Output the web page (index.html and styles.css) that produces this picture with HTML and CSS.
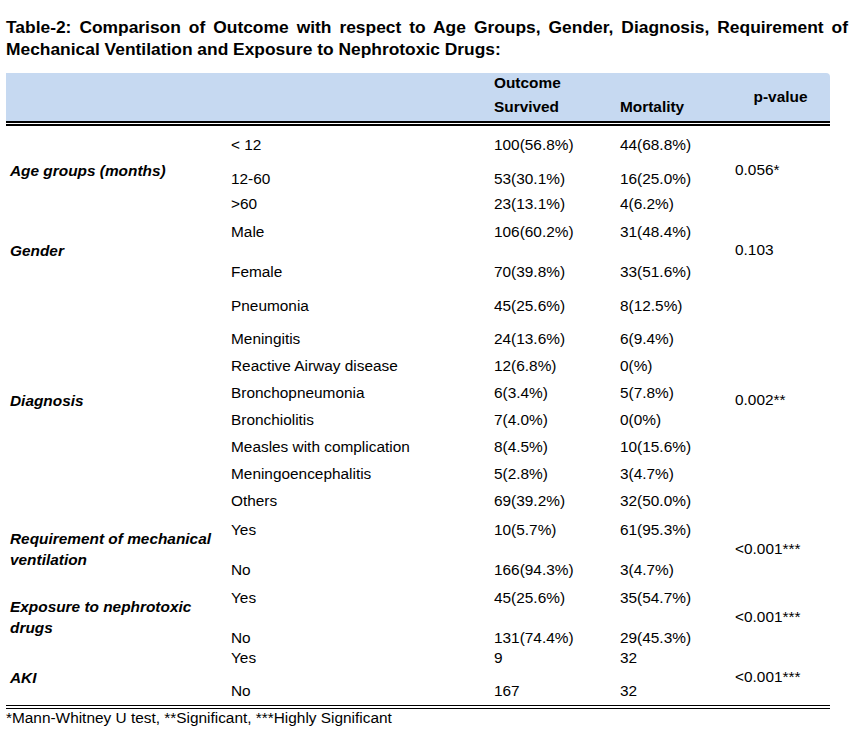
FILE: index.html
```html
<!DOCTYPE html>
<html lang="en">
<head>
  <meta charset="UTF-8" />
  <meta name="viewport" content="width=device-width, initial-scale=1.0"/>
  <title>Table-2: Comparison of Outcome</title>
  <link rel="stylesheet" href="styles.css">
</head>
<body>
<div class="page">
  <p class="caption">Table-2: Comparison of Outcome with respect to Age Groups, Gender, Diagnosis, Requirement of Mechanical Ventilation and Exposure to Nephrotoxic Drugs:</p>

  <table class="outcome">
    <colgroup>
      <col class="c-group">
      <col class="c-sub">
      <col class="c-surv">
      <col class="c-mort">
      <col class="c-p">
    </colgroup>
    <thead>
      <tr class="h-top">
        <th rowspan="2" class="line"></th>
        <th rowspan="2" class="line"></th>
        <th colspan="2">Outcome</th>
        <th rowspan="2" class="line pval">p-value</th>
      </tr>
      <tr class="h-bottom">
        <th class="line">Survived</th>
        <th class="line">Mortality</th>
      </tr>
    </thead>
    <tbody>
      <tr class="h38">
        <td rowspan="3" class="group">Age groups (months)</td>
        <td>&lt; 12</td><td>100(56.8%)</td><td>44(68.8%)</td>
        <td rowspan="3">0.056*</td>
      </tr>
      <tr class="h30"><td>12-60</td><td>53(30.1%)</td><td>16(25.0%)</td></tr>
      <tr class="h20"><td>&gt;60</td><td>23(13.1%)</td><td>4(6.2%)</td></tr>

      <tr class="h36">
        <td rowspan="2" class="group">Gender</td>
        <td>Male</td><td>106(60.2%)</td><td>31(48.4%)</td>
        <td rowspan="2">0.103</td>
      </tr>
      <tr class="h36 low"><td>Female</td><td>70(39.8%)</td><td>33(51.6%)</td></tr>

      <tr class="h39">
        <td rowspan="8" class="group">Diagnosis</td>
        <td>Pneumonia</td><td>45(25.6%)</td><td>8(12.5%)</td>
        <td rowspan="8">0.002**</td>
      </tr>
      <tr><td>Meningitis</td><td>24(13.6%)</td><td>6(9.4%)</td></tr>
      <tr><td>Reactive Airway disease</td><td>12(6.8%)</td><td>0(%)</td></tr>
      <tr><td>Bronchopneumonia</td><td>6(3.4%)</td><td>5(7.8%)</td></tr>
      <tr><td>Bronchiolitis</td><td>7(4.0%)</td><td>0(0%)</td></tr>
      <tr><td>Measles with complication</td><td>8(4.5%)</td><td>10(15.6%)</td></tr>
      <tr><td>Meningoencephalitis</td><td>5(2.8%)</td><td>3(4.7%)</td></tr>
      <tr><td>Others</td><td>69(39.2%)</td><td>32(50.0%)</td></tr>

      <tr class="h32">
        <td rowspan="2" class="group">Requirement of mechanical ventilation</td>
        <td>Yes</td><td>10(5.7%)</td><td>61(95.3%)</td>
        <td rowspan="2">&lt;0.001***</td>
      </tr>
      <tr class="h38 low"><td>No</td><td>166(94.3%)</td><td>3(4.7%)</td></tr>

      <tr class="h28">
        <td rowspan="2" class="group">Exposure to nephrotoxic drugs</td>
        <td>Yes</td><td>45(25.6%)</td><td>35(54.7%)</td>
        <td rowspan="2">&lt;0.001***</td>
      </tr>
      <tr class="h37 low tight"><td>No</td><td>131(74.4%)</td><td>29(45.3%)</td></tr>

      <tr class="h18">
        <td rowspan="2" class="group">AKI</td>
        <td>Yes</td><td>9</td><td>32</td>
        <td rowspan="2">&lt;0.001***</td>
      </tr>
      <tr class="h38 low"><td>No</td><td>167</td><td>32</td></tr>
    </tbody>
  </table>

  <p class="note">*Mann-Whitney U test, **Significant, ***Highly Significant</p>
</div>
</body>
</html>
```

FILE: styles.css
```css
body {
  margin: 0;
  font-family: "Liberation Sans", Arial, sans-serif;
  color: #000;
  background: #fff;
}
.page {
  padding: 16px 5px 0 6px;
}
.caption {
  margin: 0 0 13px;
  font-size: 17.4px;
  line-height: 22px;
  font-weight: bold;
  text-align: justify;
}

/* table */
.outcome {
  width: 824px;
  table-layout: fixed;
  border-collapse: separate;
  border-spacing: 0;
  border-bottom: 4px double #000;
  font-size: 15.4px;
}
.c-group { width: 221px; }
.c-sub { width: 263px; }
.c-surv { width: 126px; }
.c-mort { width: 115px; }
.c-p { width: 99px; }

.outcome th,
.outcome td {
  padding: 0 4px;
  text-align: left;
  vertical-align: middle;
  line-height: 18px;
}
.outcome th {
  background: #c6d9f1;
  background-clip: padding-box;
  font-weight: bold;
}
.outcome th.line {
  border-bottom: 5px double #000;
}
.outcome th.pval {
  text-align: center;
  border-top-right-radius: 4px;
}
.h-top { height: 20px; }
.h-bottom { height: 33px; }
.h-bottom th { padding-bottom: 1px; }

.outcome tbody tr { height: 27px; }
.outcome tbody tr.h18 { height: 18px; }
.outcome tbody tr.h20 { height: 20px; }
.outcome tbody tr.h28 { height: 28px; }
.outcome tbody tr.h30 { height: 30px; }
.outcome tbody tr.h32 { height: 32px; }
.outcome tbody tr.h36 { height: 36px; }
.outcome tbody tr.h37 { height: 37px; }
.outcome tbody tr.h38 { height: 38px; }
.outcome tbody tr.h39 { height: 39px; }

.outcome tr.low td {
  vertical-align: bottom;
  padding-bottom: 5px;
}
.outcome tr.low.tight td {
  padding-bottom: 2px;
}
.outcome td.group {
  font-weight: bold;
  font-style: italic;
  line-height: 21px;
}

.note {
  margin: 0;
  font-size: 15.4px;
  line-height: 18px;
}
```
